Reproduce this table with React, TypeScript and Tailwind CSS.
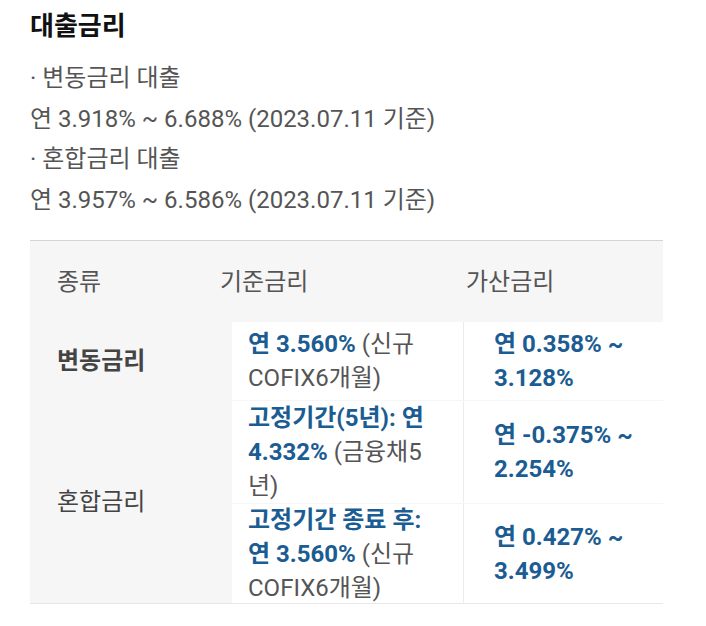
import React from "react";

const blue = "text-[#1b5c93] font-bold";

const Cell = ({ children, className = "" }: { children: React.ReactNode; className?: string }) => (
  <div className={`flex flex-col justify-center bg-white text-[24px] leading-[34px] text-[#555] ${className}`}>
    {children}
  </div>
);

export default function App() {
  return (
    <div className="min-h-[626px] w-[706px] bg-white px-[30px] pt-[10px] font-['Roboto','Noto_Sans_CJK_KR',sans-serif]">
      <h2 className="text-[26px] font-bold leading-[32px] text-[#111]">대출금리</h2>
      <div className="mt-[16px] text-[24px] leading-[40.6px] text-[#555]">
        <p>· 변동금리 대출</p>
        <p>연 3.918% ~ 6.688% (2023.07.11 기준)</p>
        <p>· 혼합금리 대출</p>
        <p>연 3.957% ~ 6.586% (2023.07.11 기준)</p>
      </div>

      <div className="mt-[20px] w-[633px] border-t border-[#d4d4d4] bg-[#f6f6f6]">
        <div className="grid h-[81px] grid-cols-[163px_246px_1fr] items-center px-[27px] text-[24px] text-[#555]">
          <span>종류</span>
          <span>기준금리</span>
          <span>가산금리</span>
        </div>
        <div className="grid grid-cols-[202px_231px_200px] grid-rows-[78px_102px_99px] gap-y-px border-b border-[#e8e8e8]">
          <div className="flex items-center px-[27px] text-[24px] font-bold text-[#444]">변동금리</div>
          <Cell className="pl-4 pr-[25px]">
            <p>
              <span className={blue}>연 3.560%</span> (신규 COFIX6개월)
            </p>
          </Cell>
          <Cell className="border-l border-[#ececec] pl-[30px] pr-4">
            <p className={blue}>연 0.358% ~ 3.128%</p>
          </Cell>

          <div className="row-span-2 flex items-center px-[27px] text-[24px] text-[#444]">혼합금리</div>
          <Cell className="pl-4 pr-[25px]">
            <p>
              <span className={blue}>고정기간(5년): 연 4.332%</span> (금융채5년)
            </p>
          </Cell>
          <Cell className="border-l border-[#ececec] pl-[30px] pr-4">
            <p className={blue}>연 -0.375% ~ 2.254%</p>
          </Cell>
          <Cell className="pl-4 pr-[25px] leading-[33px]">
            <p>
              <span className={blue}>고정기간 종료 후: 연 3.560%</span> (신규 COFIX6개월)
            </p>
          </Cell>
          <Cell className="border-l border-[#ececec] pl-[30px] pr-4">
            <p className={blue}>연 0.427% ~ 3.499%</p>
          </Cell>
        </div>
      </div>
    </div>
  );
}
